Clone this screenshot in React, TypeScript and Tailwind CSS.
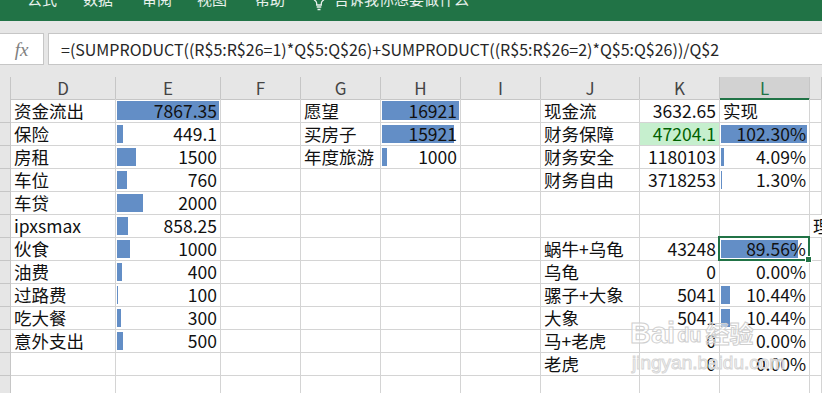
import React from 'react';

type C = { v?: string; a?: 'l' | 'r'; bar?: number; green?: boolean; sel?: boolean };

const L = (v: string): C => ({ v, a: 'l' });
const R = (v: string, bar?: number): C => ({ v, a: 'r', bar });
const E: C = {};

const rows: C[][] = [
  [L('资金流出'), R('7867.35', 102), E, L('愿望'), R('16921', 77), E, L('现金流'), R('3632.65'), L('实现'), E],
  [L('保险'), R('449.1', 6), E, L('买房子'), R('15921', 72), E, L('财务保障'), { v: '47204.1', a: 'r', green: true }, R('102.30%', 86), E],
  [L('房租'), R('1500', 19), E, L('年度旅游'), R('1000', 5), E, L('财务安全'), R('1180103'), R('4.09%', 3), E],
  [L('车位'), R('760', 10), E, E, E, E, L('财务自由'), R('3718253'), R('1.30%', 1), E],
  [L('车贷'), R('2000', 26), E, E, E, E, E, E, E, E],
  [L('ipxsmax'), R('858.25', 11), E, E, E, E, E, E, E, L('理')],
  [L('伙食'), R('1000', 13), E, E, E, E, L('蜗牛+乌龟'), R('43248'), { v: '89.56%', a: 'r', bar: 77, sel: true }, E],
  [L('油费'), R('400', 5), E, E, E, E, L('乌龟'), R('0'), R('0.00%'), E],
  [L('过路费'), R('100', 1), E, E, E, E, L('骡子+大象'), R('5041'), R('10.44%', 9), E],
  [L('吃大餐'), R('300', 4), E, E, E, E, L('大象'), R('5041'), R('10.44%', 9), E],
  [L('意外支出'), R('500', 6), E, E, E, E, L('马+老虎'), R('0'), R('0.00%'), E],
  [E, E, E, E, E, E, L('老虎'), R('0'), R('0.00%'), E],
  [E, E, E, E, E, E, E, E, E, E],
];

const cols = ['D', 'E', 'F', 'G', 'H', 'I', 'J', 'K', 'L', ''];

const GRID = 'grid grid-cols-[11px_105px_105px_80px_80px_80px_80px_99px_80px_90px_1fr]';

function Cell({ c }: { c: C }) {
  return (
    <div
      className={
        'relative flex items-end border-r border-b border-[#d4d4d4] whitespace-nowrap ' +
        (c.a === 'r' ? 'justify-end pr-[3px] ' : 'justify-start pl-[3px] ') +
        (c.green ? 'bg-[#c6efce] text-[#006100] ' : 'text-[#111] ')
      }
    >
      {c.bar ? (
        <div className="absolute left-[1px] top-[2px] bottom-[2px] bg-[#638ec6]" style={{ width: c.bar }} />
      ) : null}
      {c.v ? <span className="relative text-[17.5px] leading-[22px]">{c.v}</span> : null}
      {c.sel ? (
        <div className="absolute left-[-2px] top-[-2px] right-[-1px] bottom-[-1px] border-2 border-[#217346] z-10">
          <div className="absolute right-[-4px] bottom-[-4px] w-[7px] h-[7px] bg-[#217346] border border-white" />
        </div>
      ) : null}
    </div>
  );
}

export default function App() {
  const tabs: [string, string][] = [
    ['公式', 'ml-[27px]'],
    ['数据', 'ml-[26px]'],
    ['审阅', 'ml-[29px]'],
    ['视图', 'ml-[25px]'],
    ['帮助', 'ml-[28px]'],
  ];
  return (
    <div className="relative w-[822px] h-[393px] overflow-hidden bg-white font-['Noto_Sans_CJK_SC','Liberation_Sans',sans-serif]">
      {/* ribbon */}
      <div className="h-[21px] bg-[#217346] flex items-start overflow-hidden text-white/90 text-[15px] leading-[15px]">
        {tabs.map(([t, m]) => (
          <span key={t} className={m + ' mt-[-9px]'}>
            {t}
          </span>
        ))}
        <svg className="ml-[27px] mt-[-11px] shrink-0" width="14" height="22" viewBox="0 0 14 22" fill="none" stroke="white" strokeOpacity="0.9" strokeWidth="1.3">
          <path d="M7 1a6 6 0 0 0-3.6 10.8c.8.7 1.3 1.6 1.3 2.7V16h4.6v-1.5c0-1.1.5-2 1.3-2.7A6 6 0 0 0 7 1z" />
          <path d="M4.7 18h4.6M5.5 20.5h3" />
        </svg>
        <span className="ml-[8px] mt-[-9px]">告诉我你想要做什么</span>
      </div>
      {/* formula bar */}
      <div className="bg-[#e6e6e6] py-[12px] flex">
        <div className="w-[44px] h-[32px] bg-white border-y border-r border-[#c6c6c6] flex items-center justify-center">
          <span className="font-['Liberation_Serif',serif] italic text-[19px] text-[#808080] leading-none">fx</span>
        </div>
        <div className="ml-[4px] flex-1 h-[32px] bg-white border-y border-l border-[#c6c6c6] pl-[12px] flex items-center whitespace-nowrap overflow-hidden">
          <span className="text-[16px] leading-[20px] text-[#262626]">
            =(SUMPRODUCT((R$5:R$26=1)*Q$5:Q$26)+SUMPRODUCT((R$5:R$26=2)*Q$5:Q$26))/Q$2
          </span>
        </div>
      </div>
      {/* column header */}
      <div className={GRID + ' h-[22px] bg-[#e6e6e6]'}>
        <div className="border-r border-b border-[#c6c6c6]" />
        {cols.map((h, i) =>
          h === 'L' ? (
            <div key={i} className="bg-[#d2d2d2] border-r border-[#c6c6c6] border-b-2 border-b-[#217346] flex justify-center pt-[1px] text-[17px] leading-[20px] text-[#217346]">
              {h}
            </div>
          ) : (
            <div key={i} className="border-r border-b border-[#c6c6c6] flex justify-center pt-[1px] text-[17px] leading-[20px] text-[#444]">
              {h}
            </div>
          )
        )}
      </div>
      {/* data rows */}
      {rows.map((r, ri) => (
        <div key={ri} className={GRID + (ri === 0 ? ' h-[24px]' : ' h-[23px]')}>
          <div className="bg-[#e6e6e6] border-r border-b border-[#c6c6c6]" />
          {r.map((c, ci) => (
            <Cell key={ci} c={c} />
          ))}
        </div>
      ))}
      {/* watermark */}
      <div className="absolute left-[630px] top-[318px] flex items-end pointer-events-none">
        <span className="font-['Liberation_Sans',sans-serif] font-bold text-[29px] leading-[30px] text-white/50 [-webkit-text-stroke:1px_#cfcfcf]">Bai</span>
        <span className="ml-[2px] font-['Liberation_Sans',sans-serif] font-bold text-[20px] leading-[26px] text-white/50 [-webkit-text-stroke:1px_#cfcfcf]">du</span>
        <span className="ml-[4px] font-bold text-[24px] leading-[30px] text-white/50 [-webkit-text-stroke:1px_#cfcfcf]">经验</span>
      </div>
      <div className="absolute left-[632px] top-[352px] pointer-events-none font-['Liberation_Sans',sans-serif] text-[19px] leading-[22px] text-white/50 [-webkit-text-stroke:1px_#d6d6d6]">
        jingyan.baidu.com
      </div>
    </div>
  );
}
